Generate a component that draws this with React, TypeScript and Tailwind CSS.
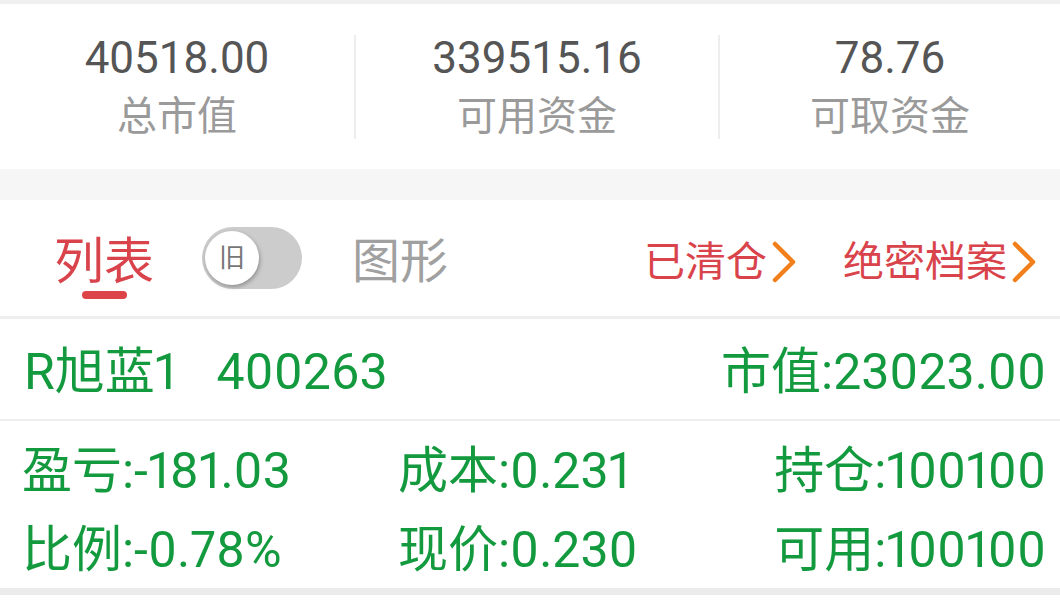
import React from "react";

const FONT = "font-['Roboto','Noto_Sans_CJK_SC',sans-serif]";

function Chevron() {
  return (
    <svg width="26" height="42" viewBox="0 0 26 42" className="ml-[4px]">
      <polyline points="4,3 22,21 4,39" fill="none" stroke="#f07f1c" strokeWidth="4.5" strokeLinecap="round" strokeLinejoin="round" />
    </svg>
  );
}

function Stat({ value, label, className }: { value: string; label: string; className: string }) {
  return (
    <div className={`flex flex-col items-center ${className}`}>
      <div className="text-[44px] leading-[54px] text-[#555555]">{value}</div>
      <div className="text-[40px] leading-[50px] text-[#9a9a9a] mt-[7px]">{label}</div>
    </div>
  );
}

export default function App() {
  return (
    <div className={`w-[1060px] h-[612px] bg-white overflow-hidden ${FONT}`}>
      <div className="h-[4px] bg-[#f0f0f0]" />
      <div className="h-[165px] flex items-center">
        <Stat value="40518.00" label="总市值" className="w-[354px]" />
        <div className="w-[2px] h-[104px] bg-[#eeeeee]" />
        <Stat value="339515.16" label="可用资金" className="w-[362px]" />
        <div className="w-[2px] h-[104px] bg-[#eeeeee]" />
        <Stat value="78.76" label="可取资金" className="flex-1" />
      </div>
      <div className="h-[31px] bg-[#f6f6f6]" />
      <div className="h-[119px] flex items-center pt-[8px] pl-[54px] pr-[23px] border-b-[3px] border-[#eeeeee]">
        <div className="relative text-[50px] leading-[60px] text-[#d9434b]">
          列表
          <div className="absolute left-[28px] top-[59px] w-[45px] h-[8px] rounded-full bg-[#dc4447]" />
        </div>
        <div className="ml-[48px] -mt-[8px] w-[100px] h-[62px] rounded-full bg-[#cccccc] flex items-center pl-[3px]">
          <div className="w-[54px] h-[54px] rounded-full bg-white shadow-[1px_2px_4px_rgba(0,0,0,0.3)] flex items-center justify-center text-[26px] text-[#777777]">
            旧
          </div>
        </div>
        <div className="ml-[50px] text-[48px] leading-[60px] text-[#a0a0a0]">图形</div>
        <div className="flex-1" />
        <div className="flex items-center text-[41px] leading-[50px] text-[#d9434b]">
          已清仓
          <Chevron />
        </div>
        <div className="ml-[46px] flex items-center text-[41px] leading-[50px] text-[#d9434b]">
          绝密档案
          <Chevron />
        </div>
      </div>
      <div className="h-[102px] flex items-center pt-[6px] pl-[24px] pr-[14px] border-b-[2px] border-[#eeeeee] text-[50px] text-[#149a3e] proportional-nums">
        <span>R旭蓝1</span>
        <span className="ml-[40px]">400263</span>
        <span className="ml-auto">市值:23023.00</span>
      </div>
      <div className="h-[167px] flex flex-col pt-[8px] pl-[22px] pr-[14px] text-[50px] text-[#149a3e] proportional-nums">
        <div className="h-[84px] flex items-center">
          <span className="w-[376px]">盈亏:-181.03</span>
          <span>成本:0.231</span>
          <span className="ml-auto">持仓:100100</span>
        </div>
        <div className="h-[75px] flex items-center">
          <span className="w-[376px]">比例:-0.78%</span>
          <span>现价:0.230</span>
          <span className="ml-auto">可用:100100</span>
        </div>
      </div>
      <div className="h-[7px] bg-[#ebebeb]" />
    </div>
  );
}
